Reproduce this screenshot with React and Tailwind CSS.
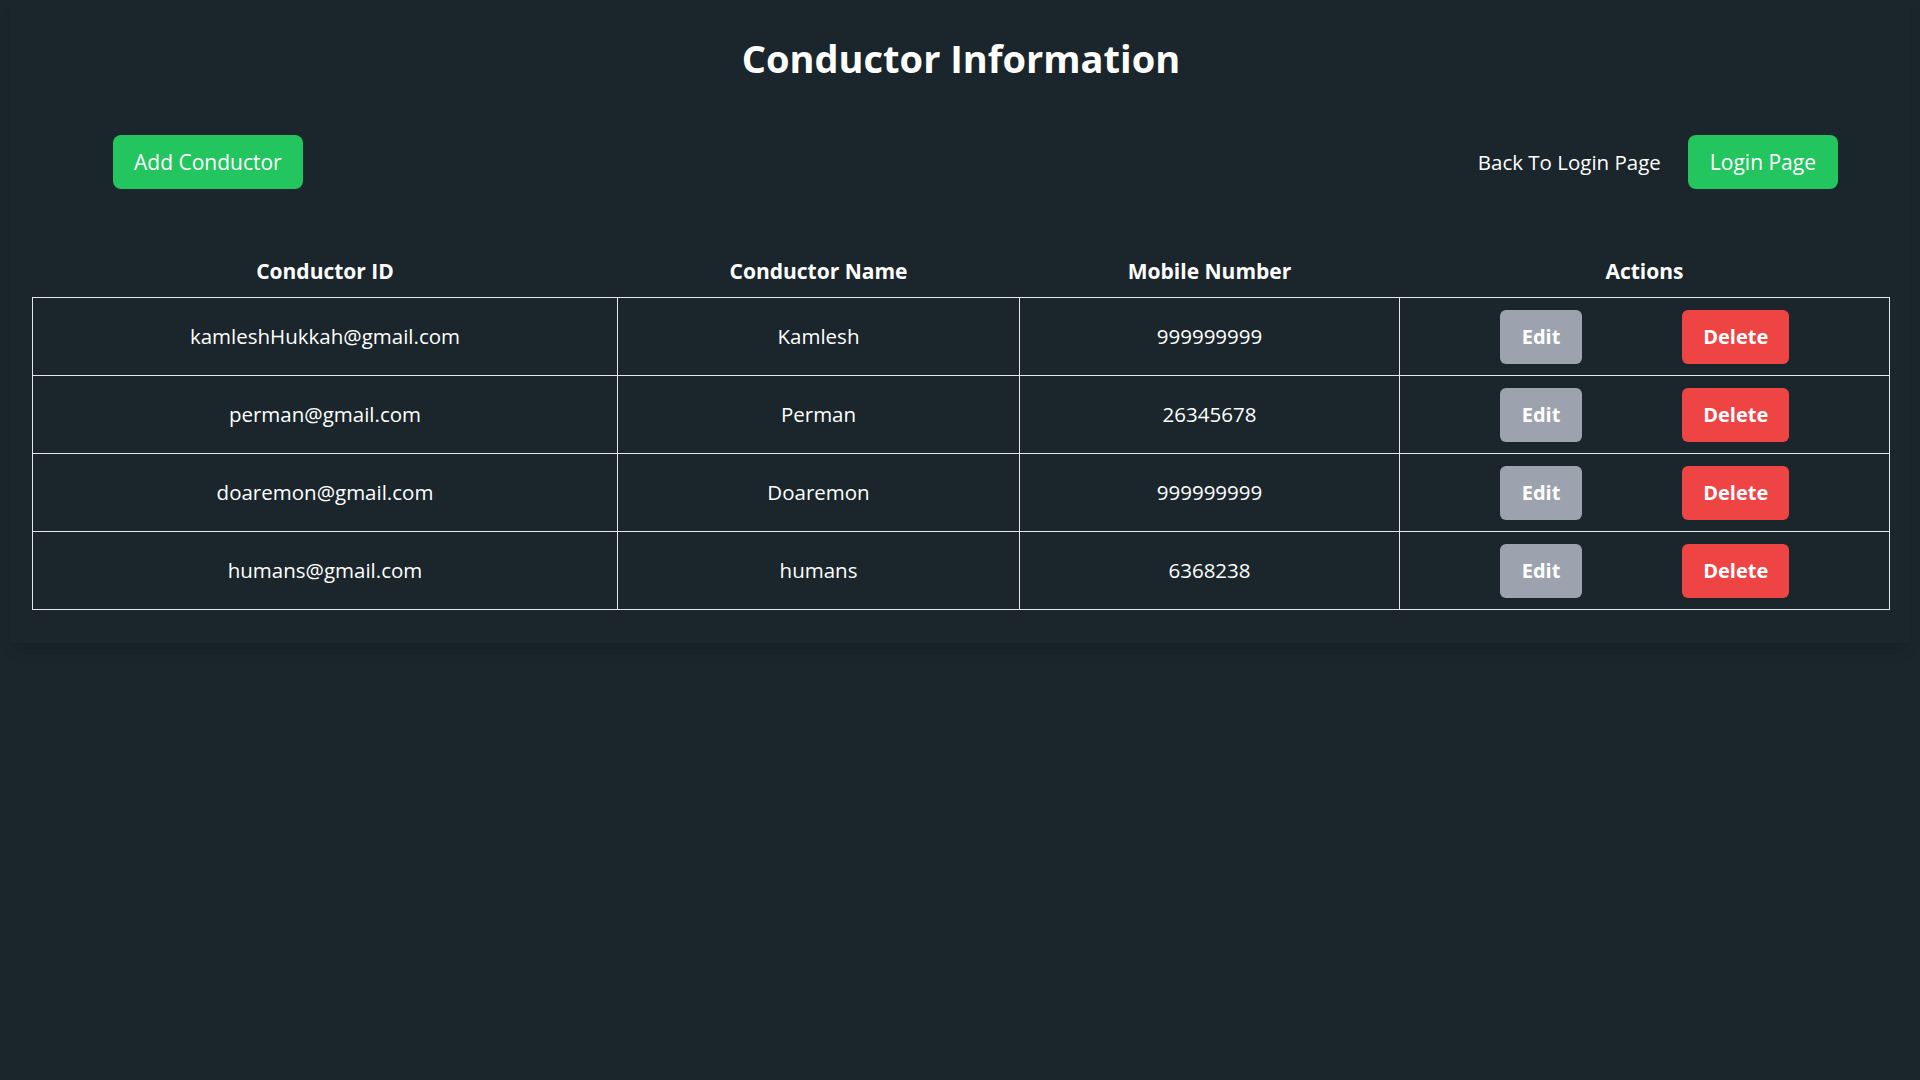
import React from 'react';

const conductors = [
    { id: 'kamleshHukkah@gmail.com', name: 'Kamlesh', mobile: '999999999' },
    { id: 'perman@gmail.com', name: 'Perman', mobile: '26345678' },
    { id: 'doaremon@gmail.com', name: 'Doaremon', mobile: '999999999' },
    { id: 'humans@gmail.com', name: 'humans', mobile: '6368238' },
];

export default function App() {
    return (
        <div className="min-h-screen bg-[#1a262b] text-white font-['Open_Sans',_'Noto_Sans',_sans-serif]">
            <div className="mx-[10px] pl-[22px] pr-[20px] pt-[32px] pb-[33px] shadow-lg">
                <h1 className="text-center text-[38px] leading-[52px] font-bold">Conductor Information</h1>

                {/* Top actions */}
                <div className="mt-[51px] pl-[81px] pr-[52px] flex items-center justify-between">
                    <button className="bg-[#22c55e] text-white text-[21px] leading-[30px] px-[21px] py-3 rounded-lg">
                        Add Conductor
                    </button>
                    <div className="flex items-center gap-[27px]">
                        <span className="text-[20.5px]">Back To Login Page</span>
                        <button className="bg-[#22c55e] text-white text-[21px] leading-[30px] px-[22px] py-3 rounded-lg">
                            Login Page
                        </button>
                    </div>
                </div>

                {/* Table */}
                <table className="mt-[56px] w-full border-collapse text-[20.5px]">
                    <thead>
                        <tr>
                            <th className="w-[585px] py-3 font-bold text-[21px] leading-[28px]">Conductor ID</th>
                            <th className="w-[402px] py-3 font-bold text-[21px] leading-[28px]">Conductor Name</th>
                            <th className="w-[380px] py-3 font-bold text-[21px] leading-[28px]">Mobile Number</th>
                            <th className="py-3 font-bold text-[21px] leading-[28px]">Actions</th>
                        </tr>
                    </thead>
                    <tbody>
                        {conductors.map((c, i) => (
                            <tr key={i}>
                                <td className="border border-[#e5e7eb] text-center py-[11.5px]">{c.id}</td>
                                <td className="border border-[#e5e7eb] text-center py-[11.5px]">{c.name}</td>
                                <td className="border border-[#e5e7eb] text-center py-[11.5px]">{c.mobile}</td>
                                <td className="border border-[#e5e7eb] py-[11.5px]">
                                    <div className="flex justify-evenly">
                                        <button className="bg-[#9ca3af] text-white font-bold text-[20px] leading-[30px] px-[22px] py-3 rounded-md">Edit</button>
                                        <button className="bg-[#ef4444] text-white font-bold text-[20px] leading-[30px] px-[21px] py-3 rounded-md">Delete</button>
                                    </div>
                                </td>
                            </tr>
                        ))}
                    </tbody>
                </table>
            </div>
        </div>
    );
}
